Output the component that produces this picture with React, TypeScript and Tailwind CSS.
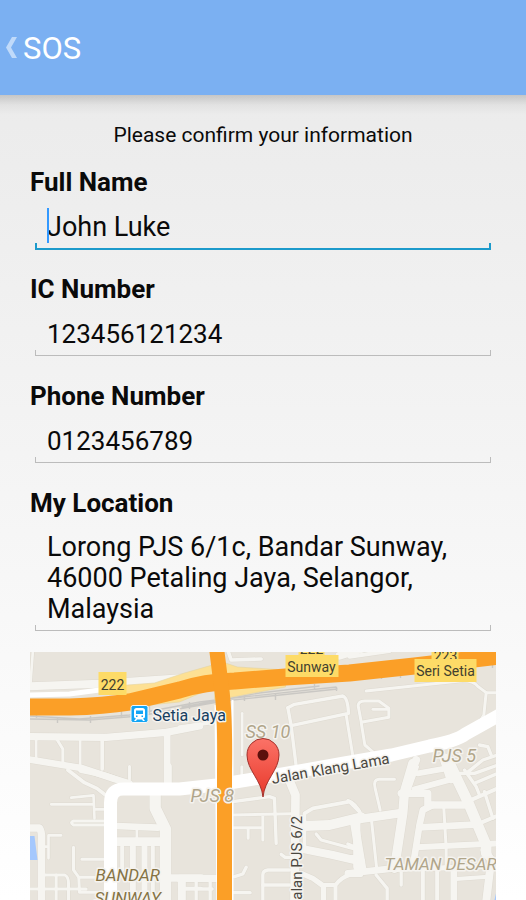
type Road = { d: string; w: number };
type Tile = { x: number; y: number; roads: Road[] };

// Street geometry, grouped in tiles drawn at three units per pixel.
const tiles: Tile[] = [
  {
    x: 20,
    y: 645,
    roads: [
      { d: "M40 20 L33 115", w: 8 },
      { d: "M20 124 L240 116 L540 96", w: 24 },
      { d: "M20 275 L260 277 L440 262 L540 243", w: 22 },
      { d: "M50 283V345 M182 280V362 M330 365V400", w: 8 },
      { d: "M112 283 L130 312V350", w: 9 },
      { d: "M248 283V372", w: 11 },
      { d: "M443 262V420", w: 20 },
      { d: "M20 342 L190 370 L285 402 L330 415", w: 20 },
    ],
  },
  {
    x: 180,
    y: 645,
    roads: [
      { d: "M143 10 L155 45 L245 42", w: 11 },
      { d: "M480 32 L545 12", w: 24 },
      { d: "M0 246 L105 232", w: 10 },
      { d: "M188 205V330", w: 8 },
      { d: "M325 188 L345 178 L490 153 Q505 158 507 205 L335 242", w: 10 },
      { d: "M325 188 L335 242 L352 380", w: 10 },
      { d: "M500 210 L522 345", w: 9 },
    ],
  },
  {
    x: 350,
    y: 645,
    roads: [
      { d: "M0 35 L120 18", w: 12 },
      { d: "M50 138 L330 108 Q370 105 385 124 L410 143 L445 143", w: 9 },
      { d: "M410 143 L403 210 L385 240", w: 9 },
      { d: "M35 230 L26 182 Q27 168 45 168 L88 168 L118 190 V217 L35 232 L46 300 L75 325", w: 9 },
      { d: "M70 193H116", w: 8 },
      { d: "M200 345 L170 420", w: 24 },
      { d: "M285 340 L305 400", w: 30 },
      { d: "M390 300 L415 305 L425 330 M350 385 L400 345 L445 330", w: 10 },
    ],
  },
  {
    x: 20,
    y: 770,
    roads: [
      { d: "M145 0 L195 38 L232 55 L262 78", w: 11 },
      { d: "M185 0 Q270 15 330 45", w: 18 },
      { d: "M330 -10V30", w: 8 },
      { d: "M446 -10V45", w: 22 },
      { d: "M95 103H222 M155 83 L222 76 L225 145 M228 118H255", w: 8 },
      { d: "M255 153H162 Q150 158 162 165H255", w: 9 },
      { d: "M290 168 L415 173", w: 20 },
      { d: "M407 75V115 L438 178V395", w: 34 },
      { d: "M290 215H440", w: 26 },
      { d: "M352 175V205", w: 8 },
      { d: "M308 230V300 M400 230V395", w: 12 },
      { d: "M340 230V395 M375 230V395", w: 18 },
      { d: "M420 324H545", w: 22 },
      { d: "M20 174H60 Q67 185 66 205 V395", w: 22 },
      { d: "M125 196H87V265 M70 230H87", w: 8 },
      { d: "M162 232V300 L178 322H250 M187 268H255", w: 9 },
      { d: "M75 315H136 Q147 320 147 340V395", w: 9 },
      { d: "M20 357H200 M110 315V395 M178 325 L180 367H235", w: 9 },
      { d: "M484 332V395", w: 18 },
      { d: "M495 355H545", w: 9 },
    ],
  },
  {
    x: 180,
    y: 770,
    roads: [
      { d: "M187 -10V30", w: 9 },
      { d: "M160 95 L270 80 L285 85 L290 220", w: 10 },
      { d: "M160 135 L335 131 M160 173H250 M206 175V205 M250 135V210", w: 9 },
      { d: "M325 20 L348 75 L345 395", w: 26 },
      { d: "M375 225V130 L400 115 L510 95 L540 125", w: 11 },
      { d: "M375 168 L450 165 L545 142", w: 30 },
      { d: "M410 192 L425 210 L525 237", w: 10 },
      { d: "M532 150V290", w: 22 },
      { d: "M360 235 L460 255 L545 275", w: 24 },
      { d: "M305 253 L317 262H340", w: 10 },
      { d: "M250 395V315 Q250 302 265 300H330", w: 10 },
      { d: "M365 310 L400 325 L432 348V395", w: 16 },
      { d: "M165 320 L190 312 L200 292 M160 368H212 M250 345H330", w: 10 },
      { d: "M0 325H112", w: 22 },
      { d: "M14 330V395 M50 330V395 M92 330V395 M0 357H98", w: 10 },
      { d: "M545 315H510 Q485 322 468 345V395 M432 345H468", w: 12 },
    ],
  },
  {
    x: 350,
    y: 770,
    roads: [
      { d: "M190 -20 L165 65 L160 130 L135 295", w: 28 },
      { d: "M-5 152 L150 130", w: 26 },
      { d: "M155 70H230", w: 22 },
      { d: "M-5 92 Q20 100 35 135", w: 10 },
      { d: "M135 28H88 Q70 30 77 55 L92 120", w: 9 },
      { d: "M205 -10 L180 60", w: 8 },
      { d: "M195 58 L305 28 M205 10 L290 -5", w: 18 },
      { d: "M235 70V105 H345", w: 22 },
      { d: "M300 -20 L355 95 L410 225V250", w: 32 },
      { d: "M250 105 L220 120 L210 165 L190 290", w: 20 },
      { d: "M210 172 L375 164", w: 20 },
      { d: "M200 232 L445 220", w: 18 },
      { d: "M283 115 L290 235V300", w: 9 },
      { d: "M66 150 L82 300", w: 9 },
      { d: "M14 155 L38 300", w: 26 },
      { d: "M-5 222 L18 232 M-5 260H25", w: 10 },
      { d: "M-5 310 L160 292", w: 20 },
      { d: "M140 298 L400 290", w: 16 },
      { d: "M80 315 L113 355V395 M155 300V345", w: 10 },
      { d: "M220 300V395 M263 300V395", w: 12 },
      { d: "M313 295V395", w: 20 },
      { d: "M320 327 L415 320", w: 12 },
      { d: "M405 240 L425 270 L410 395", w: 24 },
      { d: "M360 92 L445 55 M395 158 L445 137", w: 12 },
      { d: "M345 0 L380 50 L390 75 M330 10 H375 L445 -15 M375 40 L445 10 M405 65 L430 145", w: 10 },
    ],
  },
];

const railway =
  "M30 716 L80 719 L130 715 L200 702 L225 699 L337 687 M30 719 L90 720 L140 716 L224 701 L338 689 M182 707 L260 693 L320 686 M37 714V718 M58 718V723 M91 716V723 M122 711V718 M150 706V714 M190 702V709 M245 697V701 M276 693V700 M315 684V689 M337 687V691 M382 675V679 M401 673V678 M493 665V668";

function RoadNetwork() {
  return (
    <g fill="none" strokeLinecap="round" strokeLinejoin="round">
      {[true, false].map((casing) => (
        <g key={String(casing)} stroke={casing ? "#dedad1" : "#f6f5f1"}>
          {tiles.map((tile) => (
            <g
              key={`${tile.x}-${tile.y}`}
              transform={`translate(${tile.x} ${tile.y}) scale(0.33333)`}
            >
              {tile.roads.map((road) => (
                <path key={road.d} d={road.d} strokeWidth={casing ? road.w + 3 : road.w} />
              ))}
            </g>
          ))}
        </g>
      ))}
    </g>
  );
}

function LocationMap() {
  return (
    <svg
      role="img"
      aria-label="Map of my location"
      viewBox="30 652 467 248"
      preserveAspectRatio="xMidYMid slice"
      className="mt-5 block h-[248px] w-full bg-[#e8e4dc] font-[Roboto,sans-serif]"
    >
      <RoadNetwork />
      <path d="M30 836h5l3 24h-8zM497 891l-2 9h2z" fill="#a5c8fd" />

      {/* Railway */}
      <path d={railway} fill="none" stroke="#cac8c4" strokeWidth="1.4" />

      {/* Minor arterial */}
      <g fill="none" stroke="#fff" strokeLinejoin="round">
        <path d="M30 695 L70 694 L100 690" strokeWidth="5" />
        <path d="M111 905V803Q111 789 124 789H180L217 785L260 778L345 763L392 755L430 746Q457 741 466 734L500 715" strokeWidth="13" />
        <path d="M216 705L218 905M233 700V905" strokeWidth="2" />
      </g>

      {/* Highway slip roads */}
      <g fill="#fde093" stroke="#e4d3a0" strokeWidth="0.6">
        <path d="M115 686L155 683L185 673L213 665V688L180 702L140 706z" />
        <path d="M226 663L238 667L286 670V687L233 697L215 700V680z" />
      </g>

      {/* Highways */}
      <g fill="none" stroke="#fb9f27" strokeLinejoin="round">
        <path d="M25 707H70Q105 706 130 702L180 690Q205 682 235 681L286 677L350 673L415 666L500 656" strokeWidth="17" />
        <path d="M217 648L221 680Q226 710 225 770V905" strokeWidth="15" />
      </g>

      {/* Route shields */}
      <g fill="#fddb67">
        <path d="M299 652h26v5h-26zM432 652h27v8h-27z" />
        <path d="M99 672h28v23H99zM286 655h53v22h-53zM415 659h62v23h-62z" />
      </g>
      <g fill="#41402f" fontSize="14" textAnchor="middle">
        <text x="113" y="690">222</text>
        <text x="312" y="672">Sunway</text>
        <text x="446" y="676">Seri Setia</text>
      </g>
      <svg x="299" y="652" width="26" height="3" viewBox="0 0 26 3">
        <text x="13" y="2" fontSize="14" textAnchor="middle" fill="#41402f">222</text>
      </svg>
      <svg x="432" y="652" width="27" height="7" viewBox="0 0 27 7">
        <text x="14" y="9" fontSize="14" textAnchor="middle" fill="#41402f">223</text>
      </svg>

      {/* Train station */}
      <rect x="131.500" y="705.500" width="17" height="17" rx="2" fill="#13a5f5" stroke="#f4f6f6" />
      <path
        fill="#fff"
        fillRule="evenodd"
        d="M137 708h6q2.500 0 2.500 2.500v6q0 2-2 2l2 2.500h-2l-1-1.500h-5l-1 1.500h-2l2-2.500q-2 0-2-2v-6q0-2.500 2.500-2.500zM136.500 710.500v3.500h7v-3.500zM136.500 715.500v1.500h1.500v-1.500zM142 715.500v1.500h1.500v-1.500z"
      />

      {/* Place and street names */}
      <g stroke="#f5f3ef" strokeWidth="3" strokeLinejoin="round" className="[paint-order:stroke]">
        <text x="153" y="721" fontSize="16" fill="#17405f">Setia Jaya</text>
        <g fontStyle="italic" fill="#b0a58a" fontSize="18">
          <text x="246" y="738">SS 10</text>
          <text x="191" y="802">PJS 8</text>
          <text x="433" y="762">PJS 5</text>
        </g>
        <text x="385" y="870" fontSize="17" fontStyle="italic" fill="#b0a58a">TAMAN DESAR</text>
        <g fontStyle="italic" fill="#857345" fontSize="17">
          <text x="96" y="881">BANDAR</text>
          <text x="95" y="904">SUNWAY</text>
        </g>
        <g fill="#4a4740" fontSize="15">
          <text transform="translate(273 784) rotate(-10)">Jalan Klang Lama</text>
          <text transform="translate(302 908) rotate(-90)">Jalan PJS 6/2</text>
        </g>
      </g>

      {/* Pin */}
      <defs>
        <linearGradient id="pin" x1="0" y1="0" x2="0" y2="1">
          <stop offset="0" stopColor="#fb7267" />
          <stop offset="1" stopColor="#e8392b" />
        </linearGradient>
      </defs>
      <path
        d="M263.500 797C262 780 247.500 770 247.500 755A16 16.500 0 0 1 279.500 755C279.500 770 265 780 263.500 797z"
        fill="url(#pin)"
        stroke="#a3302a"
      />
      <circle cx="263.500" cy="755" r="5.500" fill="#5c100d" />
    </svg>
  );
}

function Underline({ active = false }: { active?: boolean }) {
  return active ? (
    <div className="h-[7px] border-x-2 border-b-2 border-[#1c9acb]" />
  ) : (
    <div className="mb-px h-[6px] border-x border-b border-[#bcbcbc]" />
  );
}

type FieldProps = {
  id: string;
  label: string;
  value: string;
  numeric?: boolean;
  active?: boolean;
};

function Field({ id, label, value, numeric, active }: FieldProps) {
  return (
    <div>
      <label htmlFor={id} className="block text-[26px] leading-8 font-bold">
        {label}
      </label>
      <div className="relative mx-[5px]">
        <input
          id={id}
          type="text"
          inputMode={numeric ? "numeric" : "text"}
          defaultValue={value}
          className={`block h-[45px] w-full bg-transparent px-3 pt-[13px] caret-[#3399ff] outline-none ${
            numeric ? "text-[26px]" : "text-[27px]"
          }`}
        />
        {active && <span className="absolute top-[10px] left-3 h-[35px] w-[2px] bg-[#3399ff]" />}
        <Underline active={active} />
      </div>
    </div>
  );
}

export default function App() {
  return (
    <div className="flex h-screen flex-col overflow-hidden bg-linear-to-b from-[#e9e9e9] to-white font-[Roboto,sans-serif] text-[#0a0a0a]">
      <header className="flex h-[95px] shrink-0 items-center bg-[#7bb0f2] pl-[6px] text-white">
        <button type="button" aria-label="Back">
          <svg width="11" height="21" viewBox="0 0 11 21" fill="#c0dafa">
            <path d="M6 0h5L5 10.500 11 21H6L0 10.500z" />
          </svg>
        </button>
        <h1 className="ml-[6px] pt-[3px] text-[31px] leading-10">SOS</h1>
      </header>
      <div className="h-5 shrink-0 bg-linear-to-b from-black/16 via-black/4 to-transparent" />
      <main className="px-[30px]">
        <p className="mt-2 mb-[19px] text-center text-[21px] leading-6">Please confirm your information</p>
        <form className="flex flex-col gap-[23px]">
          <Field id="full-name" label="Full Name" value="John Luke" active />
          <Field id="ic-number" label="IC Number" value="123456121234" numeric />
          <Field id="phone" label="Phone Number" value="0123456789" numeric />
          <div>
            <label htmlFor="location" className="block text-[26px] leading-8 font-bold">
              My Location
            </label>
            <div className="mx-[5px]">
              <textarea
                id="location"
                rows={3}
                defaultValue="Lorong PJS 6/1c, Bandar Sunway, 46000 Petaling Jaya, Selangor, Malaysia"
                className="block w-full resize-none overflow-hidden bg-transparent px-3 pt-[13px] text-[27px] leading-[31px] outline-none"
              />
              <Underline />
            </div>
          </div>
        </form>
        <LocationMap />
      </main>
    </div>
  );
}
